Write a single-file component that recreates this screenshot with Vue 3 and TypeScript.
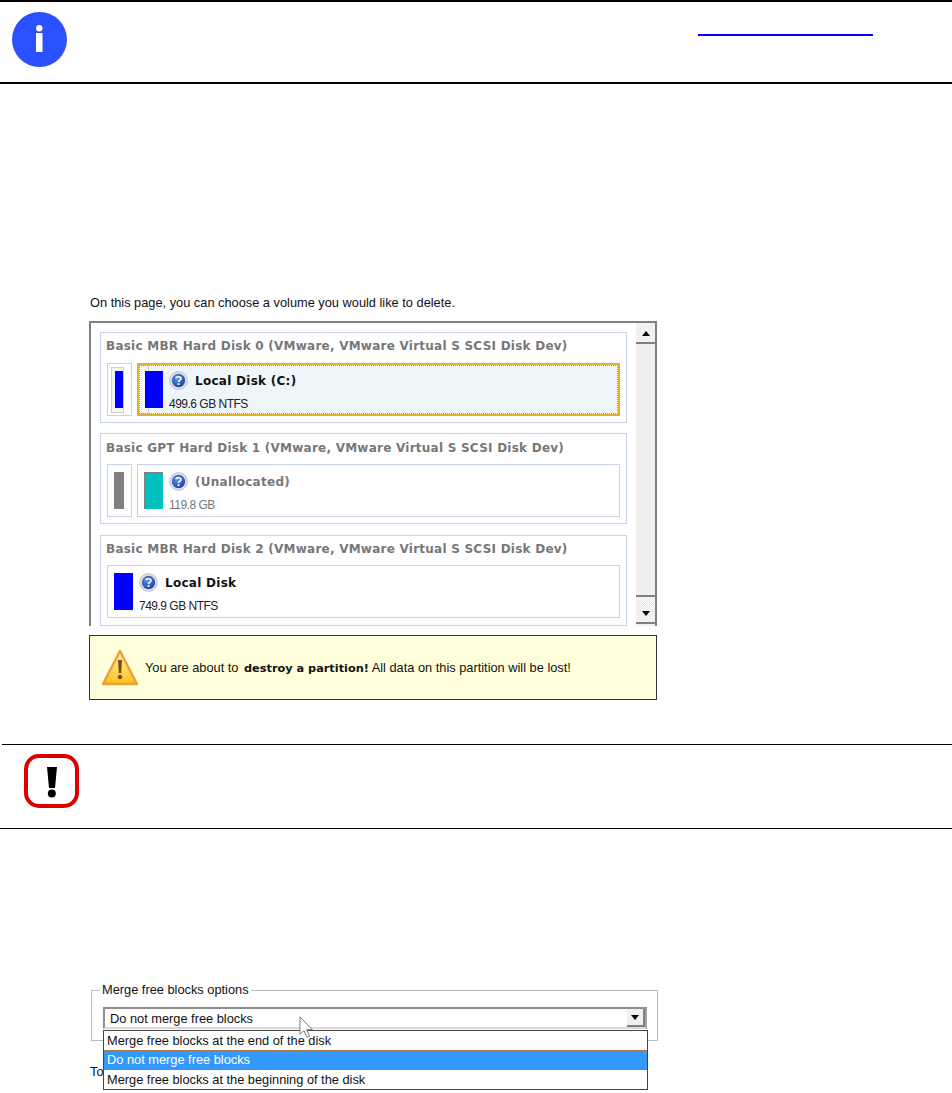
<script setup lang="ts">
interface Part {
  label: string
  size: string
  color: string
  selected?: boolean
  muted?: boolean
}
interface Disk {
  title: string
  bar?: string
  part: Part
}

const disks: Disk[] = [
  {
    title: 'Basic MBR Hard Disk 0 (VMware, VMware Virtual S SCSI Disk Dev)',
    bar: '#0000ff',
    part: { label: 'Local Disk (C:)', size: '499.6 GB NTFS', color: '#0000ff', selected: true },
  },
  {
    title: 'Basic GPT Hard Disk 1 (VMware, VMware Virtual S SCSI Disk Dev)',
    bar: '#808080',
    part: { label: '(Unallocated)', size: '119.8 GB', color: '#00c0c0', muted: true },
  },
  {
    title: 'Basic MBR Hard Disk 2 (VMware, VMware Virtual S SCSI Disk Dev)',
    part: { label: 'Local Disk', size: '749.9 GB NTFS', color: '#0000ff' },
  },
]

const mergeOptions = [
  'Merge free blocks at the end of the disk',
  'Do not merge free blocks',
  'Merge free blocks at the beginning of the disk',
]
</script>

<template>
  <div class="page">
    <!-- info note -->
    <div class="note note-info">
      <svg class="info-icon" width="56" height="56" viewBox="0 0 56 56">
        <circle cx="27.5" cy="27.5" r="27.5" fill="#2b50ff" />
        <circle cx="27.3" cy="16.3" r="3.2" fill="#fff" />
        <rect x="24" y="21" width="6.5" height="19" fill="#fff" />
      </svg>
      <span class="link"></span>
    </div>

    <section class="figure figure-volumes">
      <p class="caption">On this page, you can choose a volume you would like to delete.</p>
      <div class="listbox">
        <div class="disks">
          <div v-for="disk in disks" :key="disk.title" class="disk">
            <div class="disk-title">{{ disk.title }}</div>
            <div class="disk-row">
              <div v-if="disk.bar" class="mini" :class="{ 'mini-selected': disk.part.selected }">
                <span class="mini-bar" :style="{ backgroundColor: disk.bar }"></span>
              </div>
              <div class="part" :class="{ 'part-selected': disk.part.selected, 'part-muted': disk.part.muted }">
                <span class="swatch" :style="{ backgroundColor: disk.part.color }"></span>
                <div class="part-text">
                  <div class="part-head">
                    <svg class="q-icon" width="19" height="19" viewBox="0 0 20 20">
                      <defs>
                        <radialGradient id="qg" cx="40%" cy="35%" r="70%">
                          <stop offset="0" stop-color="#5d93e8" />
                          <stop offset="1" stop-color="#1c3f9e" />
                        </radialGradient>
                      </defs>
                      <circle cx="10" cy="10" r="9.3" fill="#dfe3ea" stroke="#a9aeb8" stroke-width="0.8" />
                      <circle cx="10" cy="10" r="7" fill="url(#qg)" />
                      <path d="M7.4 7.6 C7.6 5.6 12.6 5.4 12.6 8 C12.6 9.8 10 9.7 10 11.6" fill="none" stroke="#fff" stroke-width="1.7" />
                      <rect x="9.1" y="12.8" width="1.9" height="1.9" fill="#fff" />
                    </svg>
                    <b class="part-label">{{ disk.part.label }}</b>
                  </div>
                  <div class="part-size">{{ disk.part.size }}</div>
                </div>
              </div>
            </div>
          </div>
        </div>
        <div class="scrollbar">
          <div class="sb-btn"><span class="arrow-up"></span></div>
          <div class="sb-thumb"></div>
          <div class="sb-track"></div>
          <div class="sb-btn"><span class="arrow-down"></span></div>
        </div>
      </div>
      <div class="warning">
        <svg class="warn-icon" width="38" height="38" viewBox="0 0 38 38">
          <defs>
            <linearGradient id="wg" x1="0" y1="0" x2="0" y2="1">
              <stop offset="0" stop-color="#fff2b8" />
              <stop offset="1" stop-color="#fbc21a" />
            </linearGradient>
          </defs>
          <path d="M19 2 L36 35 L2 35 Z" fill="url(#wg)" stroke="#e9a13a" stroke-width="2.4" stroke-linejoin="round" />
          <path d="M17 11 H21 L20.2 24 H17.8 Z" fill="#7a4a10" />
          <circle cx="19" cy="28" r="2.2" fill="#7a4a10" />
        </svg>
        <span class="warn-text">You are about to <b>destroy a partition!</b> All data on this partition will be lost!</span>
      </div>
    </section>

    <!-- warning note -->
    <div class="note note-warn">
      <svg class="stop-icon" width="56" height="56" viewBox="0 0 56 56">
        <rect x="2" y="2" width="51" height="50" rx="13" fill="#fff" stroke="#dd0000" stroke-width="4" />
        <path d="M23 13 H33 L31 34 H25 Z" fill="#000" />
        <circle cx="27.8" cy="39.5" r="4" fill="#000" />
      </svg>
    </div>

    <section class="figure figure-merge">
      <fieldset class="group">
        <legend>Merge free blocks options</legend>
        <div class="select">
          <span>Do not merge free blocks</span>
          <div class="sb-btn select-btn"><span class="arrow-down"></span></div>
        </div>
      </fieldset>
      <p class="to-text">To</p>
      <ul class="dropdown">
        <li v-for="(opt, i) in mergeOptions" :key="opt" :class="{ active: i === 1 }">{{ opt }}</li>
      </ul>
      <svg class="cursor" width="16" height="23" viewBox="0 0 18 26">
        <path d="M1 1 V21 L5.5 16.5 L9 24 L12 22.6 L8.6 15.5 H15 Z" fill="#fff" stroke="#6d6d6d" stroke-width="1" />
      </svg>
    </section>
  </div>
</template>

<style>
body {
  background: #fff;
}
</style>

<style scoped>
.page {
  width: 952px;
  height: 1093px;
  overflow: hidden;
  background: #fff;
  font-family: "Liberation Sans", Arial, sans-serif;
  color: #111;
  box-sizing: border-box;
}

.note {
  position: relative;
  box-sizing: border-box;
  border-bottom: 2px solid #000;
}
.note-info {
  height: 84px;
  border-top: 2px solid #000;
  padding: 10px 0 0 12px;
}
.info-icon {
  display: block;
}
.link {
  position: absolute;
  left: 698px;
  top: 32px;
  width: 175px;
  height: 2px;
  background: #0000ff;
}
.note-warn {
  height: 85px;
  margin-top: 44px;
  border-bottom-width: 1px;
  padding: 10px 0 0 24px;
}
.note-warn::before {
  content: "";
  position: absolute;
  left: 2px;
  right: 0;
  top: 0;
  height: 1px;
  background: #000;
}
.stop-icon {
  display: block;
}

.figure {
  margin-left: 89px;
  width: 568px;
}
.figure-volumes {
  margin-top: 212px;
}
.caption {
  margin: 0 0 11px 1px;
  font-size: 12.8px;
  line-height: 14px;
  white-space: nowrap;
}
.listbox {
  height: 305px;
  box-sizing: border-box;
  display: flex;
  background: #fff;
  border-top: 2px solid #808080;
  border-left: 2px solid #808080;
  border-right: 2px solid #808080;
  padding-left: 1px;
  overflow: hidden;
}
.disks {
  width: 543px;
  padding: 9px 0 0 8px;
  box-sizing: border-box;
  display: flex;
  flex-direction: column;
  gap: 10px;
}
.disk {
  width: 527px;
  height: 91px;
  flex: none;
  box-sizing: border-box;
  border: 1px solid #c6d3e6;
  padding: 0 6px;
}
.disk:last-child {
  margin-top: 1px;
}
.disk-title {
  height: 30px;
  margin-left: -1px;
  padding-top: 6px;
  box-sizing: border-box;
  font-family: "DejaVu Sans", sans-serif;
  font-weight: bold;
  font-size: 12px;
  line-height: 15px;
  letter-spacing: 0.24px;
  color: #777;
  white-space: nowrap;
}
.disk:nth-child(2) .disk-title {
  padding-top: 7px;
}
.disk:last-child .disk-title {
  height: 29px;
}
.disk-row {
  display: flex;
  gap: 5px;
  height: 53px;
}
.mini {
  width: 25px;
  box-sizing: border-box;
  border: 1px solid #c6d3e6;
  padding: 7px 6px;
}
.mini-bar {
  display: block;
  width: 10px;
  height: 37px;
}
.mini-selected {
  padding: 4px;
}
.mini-selected .mini-bar {
  width: 8px;
  background-clip: content-box;
  border-style: solid;
  border-color: #f4f4f4;
  border-width: 3px 0 4px 3px;
  outline: 1px solid #cfcfcf;
}
.part {
  flex: 1;
  display: flex;
  box-sizing: border-box;
  border: 1px solid #c6d3e6;
  padding: 7px 0 0 6px;
}
.part-selected {
  position: relative;
  isolation: isolate;
  border: 2px solid #e0b030;
  outline: 1px dotted #7f9fd0;
  outline-offset: -3px;
  background: #eef6f9;
  padding: 6px 0 0 6px;
}
.swatch {
  display: block;
  width: 19px;
  height: 37px;
  flex: none;
}
.part-selected .swatch {
  width: 18px;
  position: relative;
}
.part-selected .swatch::before {
  content: "";
  position: absolute;
  left: -6px;
  top: -6px;
  width: 9px;
  height: 47px;
  background: #f4f4f4;
  border: 1px solid #cfcfcf;
  border-left: none;
  z-index: -1;
}
.part-muted .swatch {
  border-top: 1px solid #808080;
  border-left: 1px solid #808080;
  box-sizing: border-box;
}
.part-text {
  margin-left: 6px;
  display: flex;
  flex-direction: column;
}
.part-head {
  display: flex;
  align-items: center;
  gap: 7px;
  height: 19px;
}
.q-icon {
  display: block;
  flex: none;
}
.part-label {
  font-family: "DejaVu Sans", sans-serif;
  font-size: 12px;
  letter-spacing: 0.27px;
  color: #111;
}
.part-size {
  margin-top: 7px;
  font-size: 12px;
  letter-spacing: -0.5px;
  line-height: 14px;
  color: #222;
}
.part-muted .part-label,
.part-muted .part-size {
  color: #777;
}

.scrollbar {
  width: 19px;
  margin-left: 1px;
  display: flex;
  flex-direction: column;
  background: #f1f1f1;
  padding-top: 2px;
}
.sb-btn {
  flex: none;
  height: 19px;
  width: 19px;
  box-sizing: border-box;
  display: flex;
  align-items: center;
  justify-content: center;
  background: #f0f0f0;
  border-bottom: 2px solid #808080;
}
.sb-thumb {
  height: 253px;
  flex: none;
  background: #efefef;
  border-bottom: 2px solid #808080;
  box-sizing: border-box;
}
.sb-track {
  height: 8px;
  flex: none;
  background: repeating-conic-gradient(#fff 0 25%, #e4e4e4 0 50%) 0 0 / 2px 2px;
}
.arrow-up {
  width: 0;
  height: 0;
  border-left: 4px solid transparent;
  border-right: 4px solid transparent;
  border-bottom: 5px solid #000;
}
.arrow-down {
  width: 0;
  height: 0;
  border-left: 4px solid transparent;
  border-right: 4px solid transparent;
  border-top: 5px solid #000;
}

.warning {
  margin-top: 9px;
  height: 65px;
  box-sizing: border-box;
  display: flex;
  align-items: center;
  gap: 6px;
  padding: 0 0 0 11px;
  background: #ffffdc;
  border: 1px solid #333;
}
.warn-icon {
  display: block;
  flex: none;
}
.warn-text {
  font-size: 12.8px;
}
.warn-text b {
  margin-left: 2px;
  font-family: "DejaVu Sans", sans-serif;
  font-size: 11.3px;
}

.figure-merge {
  position: relative;
  margin-top: 154px;
}
.group {
  margin: 0 0 0 2px;
  padding: 0;
  width: 567px;
  height: 58px;
  box-sizing: border-box;
  border: 1px solid #bcbcbc;
}
.group legend {
  margin-left: 8px;
  padding: 0 2px;
  font-size: 12.8px;
  line-height: 14px;
}
.select {
  margin: 10px 0 0 11px;
  width: 544px;
  height: 22px;
  box-sizing: border-box;
  display: flex;
  align-items: center;
  justify-content: space-between;
  border: 2px solid #909090;
  border-right-color: #a0a0a0;
  border-bottom-color: #d8d8d8;
  padding-left: 5px;
  font-size: 12.8px;
}
.select-btn {
  height: 18px;
  width: 18px;
  border-right: 2px solid #808080;
}
.to-text {
  margin: 24px 0 0 1px;
  font-size: 12.8px;
  line-height: 14px;
}
.dropdown {
  position: absolute;
  left: 14px;
  top: 47px;
  width: 545px;
  margin: 0;
  padding: 0;
  list-style: none;
  box-sizing: border-box;
  background: #fff;
  border: 1px solid #444;
  font-size: 12.8px;
}
.dropdown li {
  height: 19px;
  line-height: 19px;
  padding-left: 3px;
  box-sizing: border-box;
}
.dropdown li.active {
  height: 20px;
  background: #3399ff;
  color: #fff;
  outline: 1px dotted #a8763c;
  outline-offset: -1px;
}
.cursor {
  position: absolute;
  left: 210px;
  top: 33px;
}
</style>
